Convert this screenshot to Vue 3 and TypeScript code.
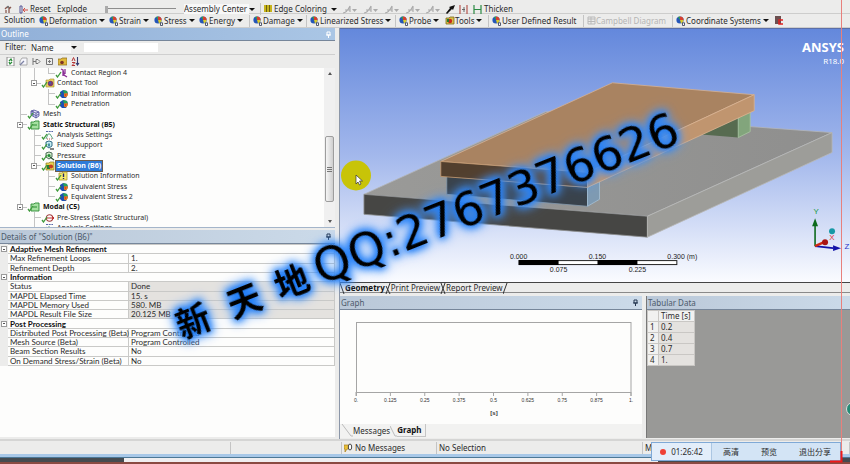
<script setup lang="ts">
import { ref } from 'vue'

interface TreeRow { cells: string[]; icon: string; text: string; open?: boolean; bold?: boolean; selected?: boolean }
interface Detail { name: string; value: string; locked?: boolean }
interface Group { title: string; rows: Detail[] }

const tree: TreeRow[] = [
  { cells: ['v', 'v', 'l'], icon: 'contact', text: 'Contact Region 4' },
  { cells: ['v', 'l'], icon: 'tool', text: 'Contact Tool', open: true },
  { cells: ['v', '', 't'], icon: 'result', text: 'Initial Information' },
  { cells: ['v', '', 'l'], icon: 'result', text: 'Penetration' },
  { cells: ['t'], icon: 'mesh', text: 'Mesh' },
  { cells: ['t'], icon: 'system', text: 'Static Structural (B5)', open: true, bold: true },
  { cells: ['v', 't'], icon: 'settings', text: 'Analysis Settings' },
  { cells: ['v', 't'], icon: 'support', text: 'Fixed Support' },
  { cells: ['v', 't'], icon: 'pressure', text: 'Pressure' },
  { cells: ['v', 'l'], icon: 'solution', text: 'Solution (B6)', open: true, bold: true, selected: true },
  { cells: ['v', '', 't'], icon: 'info', text: 'Solution Information' },
  { cells: ['v', '', 't'], icon: 'result', text: 'Equivalent Stress' },
  { cells: ['v', '', 'l'], icon: 'result', text: 'Equivalent Stress 2' },
  { cells: ['l'], icon: 'system', text: 'Modal (C5)', open: true, bold: true },
  { cells: ['', 't'], icon: 'prestress', text: 'Pre-Stress (Static Structural)' },
  { cells: ['', 't'], icon: 'settings', text: 'Analysis Settings' },
]

const groups: Group[] = [
  { title: 'Adaptive Mesh Refinement', rows: [
    { name: 'Max Refinement Loops', value: '1.' },
    { name: 'Refinement Depth', value: '2.' },
  ] },
  { title: 'Information', rows: [
    { name: 'Status', value: 'Done', locked: true },
    { name: 'MAPDL Elapsed Time', value: '15. s', locked: true },
    { name: 'MAPDL Memory Used', value: '580. MB', locked: true },
    { name: 'MAPDL Result File Size', value: '20.125 MB', locked: true },
  ] },
  { title: 'Post Processing', rows: [
    { name: 'Distributed Post Processing (Beta)', value: 'Program Controlled' },
    { name: 'Mesh Source (Beta)', value: 'Program Controlled' },
    { name: 'Beam Section Results', value: 'No' },
    { name: 'On Demand Stress/Strain (Beta)', value: 'No' },
  ] },
]

const resultMenus = ['Deformation', 'Strain', 'Stress', 'Energy', 'Damage', 'Linearized Stress']
const times = ['0.2', '0.4', '0.7', '1.']
const ticks = ['0.', '0.125', '0.25', '0.375', '0.5', '0.625', '0.75', '0.875', '1.']
const tickX = (i: number) => 356 + i * 34.375
const filterText = ref('')
const filterBy = ref('Name')
const explode = ref(0)
const center = ref('Assembly Center')
</script>

<template>
  <div class="app">
    <svg class="defs" aria-hidden="true">
      <defs>
        <linearGradient id="sky" x1="0" y1="0" x2="0" y2="1">
          <stop offset="0" stop-color="#6488dc" />
          <stop offset="0.5" stop-color="#a3b8ec" />
          <stop offset="1" stop-color="#fbfcff" />
        </linearGradient>
        <linearGradient id="plate" x1="0" y1="0" x2="1" y2="0">
          <stop offset="0" stop-color="#9a9a98" />
          <stop offset="1" stop-color="#8f8f8e" />
        </linearGradient>
        <symbol id="i-check" viewBox="0 0 14 10"><path d="M1 7l1.5 2L6 4" fill="none" stroke="#3f9a3c" stroke-width="1.3" /></symbol>
        <symbol id="i-ball" viewBox="0 0 10 10">
          <circle cx="4" cy="4" r="3.6" fill="#2456b8" />
          <path d="M4 .4a3.6 3.6 0 0 1 3.6 3.6L4 4z" fill="#d8402c" />
          <path d="M4 4h3.6A3.6 3.6 0 0 1 5 7.4z" fill="#d9c92c" />
          <path d="M4 4 2 1a3.6 3.6 0 0 1 2-.6z" fill="#35a04a" />
          <path d="M6.5 9.5V6.8h2v2.7z" fill="#fff" stroke="#2b3550" stroke-width=".8" />
        </symbol>
        <symbol id="i-result" viewBox="0 0 14 10">
          <path d="M5 3l3-2 4 1 1 3-2 4-4 0-2-2z" fill="#1f4fb2" />
          <path d="M8 1l4 1 .6 2L9 5z" fill="#28a35a" />
          <path d="M9 4.500l3.500-.5.5 2-2 2.500-2-1z" fill="#e07f20" />
          <path d="M9.500 5.200l2 .2-1 1.800z" fill="#d82c20" />
        </symbol>
        <symbol id="i-contact" viewBox="0 0 14 10"><path d="M6 1l2 1 1 5 3 2M8 2v6M10 1v5" fill="none" stroke="#8b2f96" stroke-width="1.3" /></symbol>
        <symbol id="i-tool" viewBox="0 0 14 10">
          <path d="M5 2h3l1-1h4v8H5z" fill="#ecd65e" stroke="#a58a25" stroke-width=".6" />
          <circle cx="9.500" cy="5.500" r="2.700" fill="#7d3c6a" /><circle cx="9" cy="5" r="1" fill="#2c63c8" />
        </symbol>
        <symbol id="i-mesh" viewBox="0 0 14 10"><path d="M4 2l3-1 5 2v4L9 9 4 6zM4 2l5 2 3-1M9 4v5M6 1.500v5.500M4 4l5 2.500 3-1.500" fill="#d5d5f3" stroke="#4d4d9a" stroke-width=".8" /></symbol>
        <symbol id="i-system" viewBox="0 0 14 10">
          <path d="M4 2h3l1-1h4v8H4z" fill="#a5e0a0" stroke="#2d8a35" stroke-width=".9" />
          <path d="M6 5h4" stroke="#2d8a35" />
        </symbol>
        <symbol id="i-settings" viewBox="0 0 14 10">
          <path d="M5 9l2-5 2 0 3 5" fill="none" stroke="#54a07c" stroke-width=".9" />
          <path d="M5 1.500h7" stroke="#5868a8" stroke-dasharray="2 .7" /><path d="M6 9h6" stroke="#b05050" stroke-dasharray="1 1" />
        </symbol>
        <symbol id="i-support" viewBox="0 0 14 10">
          <path d="M5 2l3-1 3 1v4L8 8 5 6z" fill="#c5ecf2" stroke="#1f5d7c" stroke-width=".9" />
          <path d="M8 3.500v3" stroke="#1d6f8c" stroke-width="1.500" /><path d="M9 9h4" stroke="#333" stroke-width="1.200" />
        </symbol>
        <symbol id="i-pressure" viewBox="0 0 14 10">
          <path d="M5 2l3-1 3 1v4L8 8 5 6z" fill="#d3eccc" stroke="#3c5d4a" stroke-width=".9" />
          <circle cx="8" cy="4.500" r="1.500" fill="#238b39" /><path d="M9 6l4 3" stroke="#2b5437" stroke-width="1.200" />
        </symbol>
        <symbol id="i-solution" viewBox="0 0 14 10">
          <path d="M5 2h3l1-1h4v8H5z" fill="#e8d24e" stroke="#8d7b25" stroke-width=".7" />
          <path d="M6 4h3v4H6z" fill="#247d3a" /><circle cx="10" cy="5.500" r="2.100" fill="#c43c22" />
        </symbol>
        <symbol id="i-info" viewBox="0 0 14 10">
          <path d="M4 2h3l1-1h4v8H4z" fill="#f7ea6c" stroke="#a89832" stroke-width=".8" />
          <path d="M8.500 2.500v3.500M8.500 7v1" stroke="#25256b" stroke-width="1.400" />
        </symbol>
        <symbol id="i-prestress" viewBox="0 0 14 10">
          <circle cx="8.500" cy="5" r="3.200" fill="none" stroke="#a33f3f" stroke-width="1.100" /><path d="M5 5h8M11 3l2 2-2 2" fill="none" stroke="#c22f2f" />
        </symbol>
        <symbol id="i-edge" viewBox="0 0 16 9">
          <path d="M1 8C4 8 6 5 8 1M3 5h5M8 1v6" fill="none" stroke="#aaa" stroke-width="1.100" /><path d="M10 4h5l-2.500 3z" fill="#aaa" />
        </symbol>
        <symbol id="i-pin" viewBox="0 0 7 7"><path d="M2 1h3v3H2zM1 4h5M3.500 4v3" fill="none" stroke="currentColor" /></symbol>
      </defs>
    </svg>

    <div class="toolbar first" role="toolbar" aria-label="Graphics options">
      <button class="tool" aria-label="Explode view">
        <svg width="8" height="9" viewBox="0 0 8 9"><path d="M1 4l2-2M2 8V5M5 8V2M5 4l2-2" stroke="#8a5a50" fill="none" stroke-width="1.300" /><circle cx="4" cy="2" r="1.200" fill="#777" /></svg>
      </button>
      <button class="tool">
        <svg width="9" height="9" viewBox="0 0 9 9"><path d="M1 1h2v7H1z" fill="none" stroke="#575796" /><path d="M4 5h5M6 3L4 5l2 2" stroke="#cf4a42" fill="none" /></svg>
        Reset
      </button>
      <button class="tool">Explode</button>
      <input v-model.number="explode" class="slider" type="range" min="0" max="10" aria-label="Explode factor">
      <div class="pick">
        <select v-model="center" aria-label="Explode center"><option>Assembly Center</option></select>
        <span class="caret" />
      </div>
      <button class="tool divided">
        <svg width="8" height="8" viewBox="0 0 8 8"><path d="M0 0h8v7H0z" fill="#c7b41c" /><path d="M2.500 0v7M5.500 0v7" stroke="#6d6212" /></svg>
        Edge Coloring <span class="caret" />
      </button>
      <button v-for="n in 5" :key="n" class="tool" :aria-label="'Edge option ' + n"><svg width="16" height="9"><use href="#i-edge" /></svg></button>
      <button class="tool" aria-label="Edge direction"><svg width="9" height="9" viewBox="0 0 9 9"><path d="M9 0L7 5 6 4 1 9 0 8l4-5-1-1z" fill="#111" /></svg></button>
      <button class="tool" aria-label="Show mesh"><svg width="9" height="9" viewBox="0 0 9 9"><path d="M1 0v9M8 0v9" stroke="#b75750" stroke-width="1.200" /><path d="M3 4.500h3M5 2v5" stroke="#666" /></svg></button>
      <button class="tool">
        <svg width="9" height="9" viewBox="0 0 9 9"><path d="M1 0v9M8 0v9M1 4.500h7" stroke="#2b8a44" stroke-width="1.200" /></svg>
        Thicken
      </button>
    </div>

    <div class="toolbar second" role="toolbar" aria-label="Solution">
      <span class="context">Solution</span>
      <button v-for="(m, i) in resultMenus" :key="m" class="tool" :class="{ divided: i > 3 }">
        <svg width="10" height="10"><use href="#i-ball" /></svg>{{ m }} <span class="caret" />
      </button>
      <button class="tool divided"><svg width="10" height="10"><use href="#i-ball" /></svg>Probe <span class="caret" /></button>
      <button class="tool">
        <svg width="10" height="9" viewBox="0 0 10 9"><path d="M1 2h3l1-1h4v7H1z" fill="#d7c048" stroke="#7d6d20" stroke-width=".8" /><circle cx="5" cy="5" r="2.200" fill="#c8281c" /><path d="M2 3h2v3H2z" fill="#227a32" /></svg>Tools <span class="caret" />
      </button>
      <button class="tool divided"><svg width="10" height="10"><use href="#i-ball" /></svg>User Defined Result</button>
      <button class="tool divided" disabled>
        <svg width="9" height="9" viewBox="0 0 9 9"><path d="M1 1h7v7H1zM1 3h7M1 5.500h7M4 1v7" fill="none" stroke="#b9b9b9" /></svg>Campbell Diagram
      </button>
      <button class="tool divided"><svg width="10" height="10"><use href="#i-ball" /></svg>Coordinate Systems <span class="caret" /></button>
      <button class="tool" aria-label="Export"><svg width="8" height="9" viewBox="0 0 8 9"><path d="M0 0h6v8H0z" fill="#6c5050" /><path d="M8 4H4v4h4" fill="none" stroke="#e02020" stroke-width="1.500" /></svg></button>
    </div>

    <main class="work">
      <section class="left">
        <h2 class="title active">Outline <svg width="7" height="7"><use href="#i-pin" /></svg></h2>
        <div class="filter">
          <label for="filter-by">Filter:</label>
          <div class="pick">
            <select id="filter-by" v-model="filterBy"><option>Name</option></select>
            <span class="caret" />
          </div>
          <input v-model="filterText" type="text" aria-label="Filter text">
        </div>
        <div class="tree-tools">
          <button aria-label="Refresh"><svg width="9" height="9" viewBox="0 0 9 9"><path d="M1 0h7v9H1z" fill="#fff" stroke="#777" stroke-width=".8" /><path d="M3 4l2-2 1 2M6 5L4 7 3 5" fill="none" stroke="#268a35" stroke-width="1.300" /></svg></button>
          <button aria-label="Rename"><svg width="9" height="9" viewBox="0 0 9 9"><path d="M3 1h5v7H1V4z" fill="#f5f5fb" stroke="#999" stroke-width=".8" /><path d="M1 8l4-4" stroke="#7d83a5" stroke-width="1.200" /></svg></button>
          <button aria-label="Collapse"><svg width="9" height="9" viewBox="0 0 9 9"><path d="M1 1v7M1 4.500h3M4 2.500h2l2 2-2 2H4z" fill="none" stroke="#777" /></svg></button>
          <button aria-label="Expand"><svg width="9" height="9" viewBox="0 0 9 9"><path d="M1.500 1.500h6v6h-6zM3 4.500h3M4.500 3v3" fill="none" stroke="#777" /></svg></button>
          <button aria-label="Folders"><svg width="9" height="9" viewBox="0 0 9 9"><path d="M0 2h3l1-1h5v7H0z" fill="#e1b93c" stroke="#8b6a1c" stroke-width=".7" /><circle cx="4" cy="5.500" r="1.800" fill="#7d3328" /></svg></button>
          <button aria-label="Sort"><svg width="9" height="9" viewBox="0 0 9 9"><path d="M1 4l1.500-3.500L4 4M1 5.500h3L1 8.500h3" fill="none" stroke="#b53838" /><path d="M6.500 0v8M5 6l1.500 2L8 6" fill="none" stroke="#333a70" stroke-width="1.100" /></svg></button>
        </div>
        <div class="tree-box">
          <ul class="tree">
            <li v-for="(r, i) in tree" :key="i">
              <span v-for="(c, j) in r.cells" :key="j" class="cell" :class="c">
                <button v-if="r.open && j === r.cells.length - 1" class="box" :aria-label="'Collapse ' + r.text" />
              </span>
              <span class="node-icon">
                <svg width="14" height="10"><use :href="'#i-' + r.icon" /><use href="#i-check" /></svg>
              </span>
              <span class="node" :class="{ bold: r.bold, selected: r.selected }">{{ r.text }}</span>
            </li>
          </ul>
          <div class="scroll" aria-hidden="true">
            <span class="arrow up" /><span class="thumb"><i /><i /><i /></span><span class="arrow down" />
          </div>
        </div>
        <h2 class="title">Details of "Solution (B6)" <svg width="7" height="7"><use href="#i-pin" /></svg></h2>
        <div class="details">
          <table>
            <colgroup><col class="c-gutter"><col class="c-name"><col></colgroup>
            <tbody v-for="g in groups" :key="g.title">
              <tr><td class="gutter"><button class="box" :aria-label="'Collapse ' + g.title" /></td><th colspan="2">{{ g.title }}</th></tr>
              <tr v-for="d in g.rows" :key="d.name">
                <td class="gutter" /><td>{{ d.name }}</td><td :class="{ locked: d.locked }">{{ d.value }}</td>
              </tr>
            </tbody>
          </table>
        </div>
      </section>

      <section class="right">
        <div class="viewport">
          <svg viewBox="339 28 511 254" preserveAspectRatio="none" role="img" aria-label="Model geometry">
            <rect x="339" y="28" width="511" height="255" fill="url(#sky)" />
            <g stroke-width=".8" stroke-linejoin="round">
              <path d="M363 194L545 111 832 132 647 216z" fill="url(#plate)" stroke="#b4b6ba" />
              <path d="M363 194L647 216V237L363 214z" fill="#464644" stroke="#8f9090" />
              <path d="M647 216L832 132V152L647 237z" fill="#9d9d99" stroke="#b9b9b6" />
              <path d="M701 134L738 117V137z" fill="#576b50" />
              <path d="M738 117L750 111V131L738 137z" fill="#82a57c" stroke="#a9c7a2" />
              <path d="M446 176L587 187V206L446 194z" fill="#39424b" stroke="#8398ab" />
              <path d="M587 187L599 181V199L587 206z" fill="#7e9ab2" stroke="#a4c0d6" />
              <path d="M440 161L612 82 754 94 587 172z" fill="#a98361" stroke="#d5b193" />
              <path d="M440 161L587 172V187L440 176z" fill="#523f2e" stroke="#c79a70" />
              <path d="M587 172L754 94V110L587 187z" fill="#c0956f" stroke="#dcb491" />
            </g>
            <g class="ruler">
              <rect x="518.500" y="260.500" width="158" height="4" fill="#fff" stroke="#222" />
              <path d="M518 260h40v5h-40zM597 260h40v5h-40z" fill="#000" />
              <text x="518" y="259">0.000</text><text x="597" y="259">0.150</text><text x="667" y="259" class="from">0.300 (m)</text>
              <text x="558" y="272">0.075</text><text x="637" y="272">0.225</text>
            </g>
            <g class="axes">
              <path d="M815 246V224" stroke="#0b6a1c" stroke-width="1.600" /><path d="M815 218l3 8h-6z" fill="#0b6a1c" />
              <path d="M815 246l18 2" stroke="#1414a8" stroke-width="1.600" /><path d="M841 248l-8 3v-6z" fill="#1414a8" />
              <path d="M815 246l9-4" stroke="#d02a12" stroke-width="2.500" /><circle cx="825" cy="242" r="3" fill="#a81414" />
              <circle cx="832" cy="231" r="3" fill="#1798a6" />
              <text x="816" y="214" fill="#1b9a3e">Y</text><text x="832" y="240" fill="#e0343a">X</text><text x="847" y="249" fill="#2a36c8">Z</text>
            </g>
            <text x="844" y="51" class="brand">ANSYS</text>
            <text x="844" y="63" class="release">R18.0</text>
          </svg>
        </div>
        <nav class="view-tabs">
          <svg width="5" height="11" viewBox="0 0 5 11"><path d="M0 0l4 11" stroke="#333" /></svg>
          <button class="bold">Geometry</button>
          <svg width="6" height="11" viewBox="0 0 6 11"><path d="M1 11L5 0M1 3l4 8" stroke="#333" fill="none" /></svg>
          <button>Print Preview</button>
          <svg width="6" height="11" viewBox="0 0 6 11"><path d="M1 11L5 0M1 0l4 11" stroke="#333" fill="none" /></svg>
          <button>Report Preview</button>
          <svg width="5" height="11" viewBox="0 0 5 11"><path d="M0 11L4 0" stroke="#333" /></svg>
        </nav>
        <div class="lower">
          <section class="graph">
            <h2 class="title">Graph <svg width="7" height="7"><use href="#i-pin" /></svg></h2>
            <svg class="chart" viewBox="340 310 302 114" role="img" aria-label="Time graph">
              <path d="M356 322.500H631M356 392.500H631M356.500 322V396M631 322V396" stroke="#a5a5a5" fill="none" />
              <g v-for="(t, i) in ticks" :key="t">
                <path :d="`M${tickX(i)} 392v4`" stroke="#a5a5a5" />
                <text :x="tickX(i)" y="402">{{ t }}</text>
              </g>
              <text x="494" y="415" class="unit">[s]</text>
            </svg>
            <nav class="graph-tabs">
              <svg width="13" height="13" viewBox="0 0 13 13"><path d="M2 0l9 12h2" stroke="#bbb" fill="none" /></svg>
              <button>Messages</button>
              <svg width="7" height="13" viewBox="0 0 7 13"><path d="M0 2l5 10h2" stroke="#bbb" fill="none" /></svg>
              <button class="bold chosen">Graph</button>
            </nav>
          </section>
          <section class="tabular">
            <h2 class="title">Tabular Data</h2>
            <table>
              <thead><tr><th /><th>Time [s]</th></tr></thead>
              <tbody><tr v-for="(t, i) in times" :key="t"><th>{{ i + 1 }}</th><td>{{ t }}</td></tr></tbody>
            </table>
          </section>
        </div>
      </section>
    </main>

    <footer class="status">
      <span /><span />
      <span>
        <svg width="9" height="10" viewBox="0 0 9 10"><path d="M0 2h5v4H3L1 9V6H0z" fill="#e8bf3a" stroke="#a87e1c" stroke-width=".7" /><ellipse cx="6" cy="4" rx="1.700" ry="3" fill="#fff" stroke="#333" stroke-width=".9" /></svg>
        No Messages
      </span>
      <span>No Selection</span>
      <span>M</span>
    </footer>
    <div class="desktop"><span /></div>

    <div class="frame" />
    <div class="orb" />
    <div class="recorder">
      <span class="clock"><i />01:26:42</span>
      <button>高清</button><button>预览</button><button>退出分享</button>
    </div>
    <svg class="overlay" viewBox="0 0 850 464" preserveAspectRatio="none">
      <path d="M841.500 451V461.500H830" fill="none" stroke="#f01818" stroke-width="2" />
      <circle cx="356" cy="175.500" r="15" fill="#c8c408" />
      <path d="M356 175v9l2-2 1.500 3 1.500-1-1.500-3h3z" fill="#fff" stroke="#333" stroke-width=".7" />
      <g class="mark" transform="translate(182 339) rotate(-21.600)">
        <text class="han" x="0 55 106" y="0">新天地</text>
        <text x="149" y="1">QQ:2767376626</text>
      </g>
    </svg>
  </div>
</template>

<style>
body { background: #ececeb; }
</style>

<style scoped>
.app {
  position: relative;
  display: flex;
  flex-direction: column;
  height: 100vh;
  overflow: hidden;
  background: #ececeb;
  color: #2b2b2b;
  font: 8px/10px "Noto Sans", "Noto Sans CJK SC", sans-serif;
}
.app * { box-sizing: border-box; }
.defs { position: absolute; width: 0; height: 0; }
svg { flex: none; }
button, input, select {
  margin: 0;
  padding: 0;
  border: 0;
  background: none;
  color: inherit;
  font: inherit;
  appearance: none;
}
button { display: flex; align-items: center; white-space: nowrap; }
.bold { font-weight: 700; color: #111; }
.caret { flex: none; border: 3px solid transparent; border-top: 3px solid #111; border-bottom: 0; }

.toolbar { display: grid; flex: none; align-items: center; padding-left: 4px; border-bottom: 1px solid #cdcdcc; }
.toolbar .tool { gap: 2px; height: 12px; }
.toolbar .caret { margin-left: 2px; }
.first {
  height: 14px;
  padding-top: 3px;
  grid-template-columns: 15px 38px 48px 79px 76px 82px 21px 21px 21px 20px 21px 13px 14px 1fr;
}
.second {
  height: 14px;
  grid-template-columns: 35px 70px 45px 45px 50px 57px 89px 50px 43px 95px 89px 103px 1fr;
}
.second .tool { gap: 0; }
.divided { border-left: 1px solid #c4c4c4; padding-left: 3px; }
.tool:disabled { color: #b4b4b4; }
.context { margin-top: -1px; }
.slider { width: 71px; height: 9px; border-radius: 0; background: linear-gradient(#8d8d8d, #8d8d8d) 0 3px / 100% 1px no-repeat; }
.slider::-webkit-slider-thumb { appearance: none; width: 3px; height: 7px; background: #aaa; }
.pick { display: flex; align-items: center; }
.pick select { width: 65px; height: 10px; background: #f8f8f8; }
.toolbar .pick .caret { margin-left: 0; }

.work { flex: 1; display: grid; grid-template-columns: 2fr 3fr; grid-template-rows: minmax(0, 1fr); min-height: 0; }
.left { display: flex; flex-direction: column; min-width: 0; padding-right: 4px; padding-bottom: 2px; border-right: 1px solid #8b96a8; }
.title {
  display: flex;
  flex: none;
  align-items: center;
  justify-content: space-between;
  height: 14px;
  margin: 0;
  padding: 0 3px 0 1px;
  border-bottom: 1px solid #76869a;
  background: linear-gradient(90deg, #bac8d8, #cbdae9);
  color: #4c5a6b;
  font-size: 8px;
  font-weight: 400;
}
.title svg { color: #253650; }
.title.active { height: 13px; background: linear-gradient(90deg, #91b0d8, #aac6e5); color: #fff; }
.title.active svg { color: #fff; }
.filter { display: flex; flex: none; align-items: center; height: 14px; padding-left: 5px; border-bottom: 1px solid #cfcfcf; }
.filter label { width: 26px; margin-top: -1px; }
.filter .pick { width: 53px; }
.filter .pick select { width: 40px; }
.filter input { width: 74px; height: 9px; background: #fff; }
.tree-tools { display: flex; flex: none; gap: 4px; height: 13px; padding-left: 6px; }
.tree-box { display: flex; flex: none; height: 160px; margin-bottom: 2px; overflow: hidden; border-bottom: 1px solid #a4b5ca; background: #fdfdfc; }
.tree { display: grid; flex: 1; grid-auto-rows: 1fr; height: 165px; margin: 0; padding: 0 0 0 13px; list-style: none; font-size: 7px; }
.tree li { display: flex; align-items: center; }
.cell { display: flex; align-items: center; width: 14px; align-self: stretch; padding-left: 4px; background-repeat: no-repeat; }
.cell.v { background: linear-gradient(#c4c4c4, #c4c4c4) 7px 0 / 1px 100% no-repeat; }
.cell.t { background: linear-gradient(#c4c4c4, #c4c4c4) 7px 0 / 1px 100% no-repeat, linear-gradient(#c4c4c4, #c4c4c4) 7px 50% / 7px 1px no-repeat; }
.cell.l { background: linear-gradient(#c4c4c4, #c4c4c4) 7px 0 / 1px 50% no-repeat, linear-gradient(#c4c4c4, #c4c4c4) 7px 50% / 7px 1px no-repeat; }
.box { width: 6px; height: 6px; border: 1px solid #9b9b9b; background: linear-gradient(#555, #555) 1px 50% / 2px 1px no-repeat #fff; }
.node-icon { display: flex; width: 15px; }
.node { padding: 0 1px; white-space: nowrap; }
.node.selected { background: #2d7bd8; color: #fff; outline: 1px solid #6b5a4a; }
.scroll { display: flex; flex-direction: column; align-items: center; width: 11px; padding: 4px 0; background: #f0f0f0; }
.arrow { border: 2px solid transparent; }
.arrow.up { border-top: 0; border-bottom: 3px solid #555; }
.arrow.down { margin-top: auto; border-bottom: 0; border-top: 3px solid #555; }
.thumb { display: grid; place-content: center; gap: 1px; width: 9px; height: 66px; margin-top: 61px; border: 1px solid #9d9d9d; border-radius: 2px; background: linear-gradient(90deg, #f5f5f5, #cfcfcf); }
.thumb i { width: 5px; height: 1px; background: #777; }
.details { flex: 1; background: #fdfdfc; font-family: Lato, sans-serif; }
.details table { width: 100%; height: 122px; border-collapse: collapse; table-layout: fixed; }
.details td, .details th { padding: 0 2px; border: 1px solid #c9c9c7; font-weight: 400; text-align: left; line-height: 8px; white-space: nowrap; }
.details th { font-weight: 700; color: #111; }
.c-gutter { width: 7px; }
.c-name { width: 121px; }
.details .gutter { padding: 0; border-color: #ececeb; background: #ececeb; }
.details .locked { background: #e4e2df; }

.right { display: flex; flex-direction: column; min-width: 0; min-height: 0; }
.viewport { flex: 1 1 0; display: grid; grid-template-rows: minmax(0, 1fr); min-height: 0; border-top: 1px solid #5b6fa8; }
.viewport svg { width: 100%; height: 100%; min-height: 0; }
.viewport text { font-family: "Liberation Sans", sans-serif; font-size: 8px; text-anchor: middle; }
.viewport .ruler text { font-size: 7px; fill: #222; }
.viewport .from { text-anchor: start; }
.viewport .brand { font: 700 13px "Noto Sans", sans-serif; fill: #fff; text-anchor: end; }
.viewport .release { font: 8px "Noto Sans", sans-serif; fill: #fff; text-anchor: end; }
.view-tabs { display: flex; flex: none; height: 11px; border-top: 1px solid #444; border-bottom: 1px solid #8a8a8a; }
.view-tabs button { height: 9px; }
.lower { display: grid; flex: none; grid-template-columns: 3fr 2fr; height: 146px; padding: 3px 0 2px; }
.graph { display: flex; flex-direction: column; min-width: 0; padding-right: 4px; }
.chart { flex: 1; width: 100%; min-height: 0; background: #fdfdfc; }
.chart text { font: 5px "Liberation Sans", sans-serif; fill: #333; text-anchor: middle; }
.chart .unit { font-size: 6px; font-weight: 700; }
.graph-tabs { display: flex; flex: none; height: 14px; background: #f2f2f1; }
.graph-tabs button { height: 13px; }
.graph-tabs .chosen { padding-right: 4px; border-right: 1px solid #c5c5c5; border-bottom: 1px solid #c5c5c5; }
.tabular { min-width: 0; border-left: 1px solid #777; background: #999997; }
.tabular table { border-collapse: collapse; background: #e4e2df; }
.tabular th, .tabular td { height: 11px; padding: 0 2px; border: 1px solid #c9c7c4; font-weight: 400; text-align: left; line-height: 10px; }
.tabular th { min-width: 11px; background: #f1f1f0; }
.tabular td, .tabular thead th:last-child { width: 36px; }

.status { display: grid; flex: none; grid-template-columns: 231px 111px 95px 206px 1fr; align-items: center; height: 18px; border-top: 2px solid #d5d5d4; border-bottom: 3px solid #a8c8e8; }
.status span { display: flex; align-items: center; gap: 2px; height: 12px; border-right: 1px solid #c4c4c4; padding-left: 2px; }
.desktop { flex: none; height: 7px; padding-left: 124px; border-top: 1px solid #4d7896; border-bottom: 2px solid #8a4a42; background: #454b50; }
.desktop span { display: block; height: 4px; margin-right: 192px; background: #efeef0; }

.frame { position: absolute; top: 0; right: 8px; bottom: 4px; border-right: 1px solid #e8807c; }
.orb { position: absolute; right: -10px; top: 402px; width: 14px; height: 14px; border: 1px solid #ddd; border-radius: 50%; background: #258c76; }
.recorder {
  position: absolute;
  right: 9px;
  bottom: 3px;
  display: grid;
  grid-template-columns: 60px 38px 38px 54px;
  width: 190px;
  height: 19px;
  border: 1px solid #7fa9d6;
  background: #d3e4f5;
  font-size: 8px;
}
.recorder > * { display: flex; align-items: center; justify-content: center; }
.clock { gap: 5px; background: #e3eefa; border-right: 1px solid #abc6e2; }
.clock i { width: 6px; height: 6px; border-radius: 50%; background: #ef4136; }
.overlay { position: absolute; inset: 0; width: 100%; height: 100%; pointer-events: none; }
.mark { font: 47px "DejaVu Sans", sans-serif; fill: #000; filter: drop-shadow(0 0 3px #1878f5) drop-shadow(0 0 4px #1f7cf8) drop-shadow(0 0 5px #5ba3fb); }
.mark .han { font: 700 34px "Noto Sans CJK SC", sans-serif; }
</style>
